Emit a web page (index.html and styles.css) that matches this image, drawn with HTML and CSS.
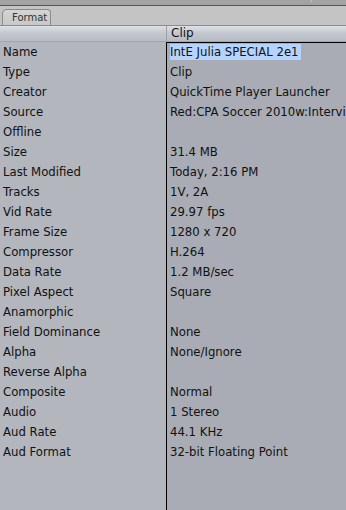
FILE: index.html
```html
<!DOCTYPE html>
<html lang="en">
<head>
    <meta charset="UTF-8">
    <title>Item Properties</title>
    <link rel="stylesheet" href="styles.css">
</head>
<body>

    <div class="titlebar">
        <span class="title">Item Properties: Clip</span>
    </div>

    <div class="tabbar">
        <div class="tab">Format</div>
    </div>

    <div class="header">
        <div class="head-label"></div>
        <div class="head-value">Clip</div>
    </div>

    <div class="props">
        <div class="labels">
            <div class="row">Name</div>
            <div class="row">Type</div>
            <div class="row">Creator</div>
            <div class="row">Source</div>
            <div class="row">Offline</div>
            <div class="row">Size</div>
            <div class="row">Last Modified</div>
            <div class="row">Tracks</div>
            <div class="row">Vid Rate</div>
            <div class="row">Frame Size</div>
            <div class="row">Compressor</div>
            <div class="row">Data Rate</div>
            <div class="row">Pixel Aspect</div>
            <div class="row">Anamorphic</div>
            <div class="row">Field Dominance</div>
            <div class="row">Alpha</div>
            <div class="row">Reverse Alpha</div>
            <div class="row">Composite</div>
            <div class="row">Audio</div>
            <div class="row">Aud Rate</div>
            <div class="row">Aud Format</div>
        </div>
        <div class="values">
            <div class="row edit"><span class="selected">IntE Julia SPECIAL 2e1</span></div>
            <div class="row">Clip</div>
            <div class="row">QuickTime Player Launcher</div>
            <div class="row">Red:CPA Soccer 2010w:Interviews</div>
            <div class="row"></div>
            <div class="row">31.4 MB</div>
            <div class="row">Today, 2:16 PM</div>
            <div class="row">1V, 2A</div>
            <div class="row">29.97 fps</div>
            <div class="row">1280 x 720</div>
            <div class="row">H.264</div>
            <div class="row">1.2 MB/sec</div>
            <div class="row">Square</div>
            <div class="row"></div>
            <div class="row">None</div>
            <div class="row">None/Ignore</div>
            <div class="row"></div>
            <div class="row">Normal</div>
            <div class="row">1 Stereo</div>
            <div class="row">44.1 KHz</div>
            <div class="row">32-bit Floating Point</div>
        </div>
    </div>

</body>
</html>
```

FILE: styles.css
```css
* {
    margin: 0;
    padding: 0;
    box-sizing: border-box;
}

body {
    width: 346px;
    height: 510px;
    overflow: hidden;
    font-family: 'DejaVu Sans', sans-serif;
    font-size: 11.7px;
    color: #111;
    background: #a9acb4;
    display: flex;
    flex-direction: column;
}

.titlebar {
    height: 6px;
    background: #a3a3a3;
    border-bottom: 1px solid #565656;
    overflow: hidden;
    display: flex;
    justify-content: flex-end;
}

.title {
    color: #c8c8c8;
    font-size: 11px;
    line-height: 11px;
    margin-top: -9px;
    margin-right: -30px;
    white-space: nowrap;
}

.tabbar {
    height: 20px;
    background: #c4c4c4;
    border-bottom: 1px solid #8c8c8c;
    display: flex;
    align-items: flex-end;
    padding-left: 2px;
}

.tab {
    width: 49px;
    height: 16px;
    border: 1px solid #8a8a8a;
    border-bottom: none;
    border-radius: 5px 4px 0 0;
    background: linear-gradient(#d4d4d4, #c8c8c8);
    font-size: 10px;
    color: #333;
    line-height: 15px;
    padding-left: 9px;
}

.header {
    height: 16px;
    display: flex;
    background: linear-gradient(#dde1e7, #c2c7cf 50%, #b7bcc5);
    border-bottom: 1px solid #a0a4ab;
}

.head-label {
    width: 167px;
    border-right: 1px solid #9a9ea6;
}

.head-value {
    padding-left: 4px;
    line-height: 15px;
    font-size: 12px;
}

.props {
    flex: 1;
    display: flex;
}

.labels {
    width: 167px;
    background: #b3b6bd;
    border-right: 1px solid #000;
}

.values {
    flex: 1;
    background: #a9acb4;
    white-space: nowrap;
    overflow: hidden;
}

.row {
    height: 20px;
    line-height: 19px;
    padding: 1px 0 0 3px;
}

.edit {
    border-top: 1px solid #000;
    padding-top: 0;
    line-height: 19px;
}

.selected {
    background: #b5d4fd;
    padding: 1px 2px 1px 0;
}
```
